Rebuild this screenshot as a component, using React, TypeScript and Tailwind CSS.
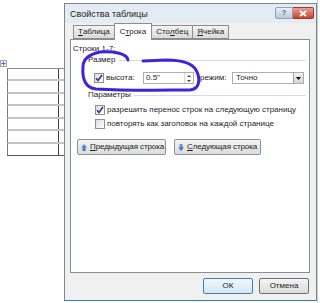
import React from 'react';

const font = { fontFamily: '"Liberation Sans", Arial, sans-serif' };

function Check({ checked }: { checked?: boolean }) {
  return (
    <span className="flex h-[10px] w-[10px] shrink-0 items-center justify-center border border-[#8e8f8f] bg-gradient-to-br from-[#dcdcdc] to-white">
      {checked && (
        <svg width="8" height="8" viewBox="0 0 8 8">
          <path d="M1 4.2 L3 6.5 L7 1" fill="none" stroke="#2b3f86" strokeWidth="1.6" />
        </svg>
      )}
    </span>
  );
}

function Tab({ label, u, active }: { label: string; u: number; active?: boolean }) {
  const text = (
    <>
      {label.slice(0, u)}
      <u>{label[u]}</u>
      {label.slice(u + 1)}
    </>
  );
  if (active) {
    return (
      <div className="relative z-10 -mb-px flex h-[17px] items-center border border-b-0 border-[#8c8e94] bg-white px-[5px] text-[8px] text-[#1e1e1e]">
        {text}
      </div>
    );
  }
  return (
    <div className="mt-[2px] flex h-[14px] items-center border border-r-0 border-[#8c8e94] bg-gradient-to-b from-[#f4f4f4] to-[#dadada] px-[4px] text-[8px] text-[#1e1e1e]">
      {text}
    </div>
  );
}

function GroupHead({ label }: { label: string }) {
  return (
    <div className="flex h-[10px] items-center pl-[17px] pr-[3px]">
      <span className="text-[8px] text-[#222]">{label}</span>
      <span className="ml-[3px] h-px flex-1 bg-[#d5dde3]" />
    </div>
  );
}

function Arrow({ down }: { down?: boolean }) {
  return (
    <svg width="6" height="7" viewBox="0 0 6 7" className="shrink-0">
      <defs>
        <linearGradient id={down ? 'ad' : 'au'} x1="0" y1="0" x2="1" y2="1">
          <stop offset="0" stopColor="#7fb2f0" />
          <stop offset="1" stopColor="#1f54b8" />
        </linearGradient>
      </defs>
      {down ? (
        <path d="M1.5 0 H4.5 V3.5 H6 L3 7 L0 3.5 H1.5 Z" fill="url(#ad)" />
      ) : (
        <path d="M3 0 L6 3.5 H4.5 V7 H1.5 V3.5 H0 Z" fill="url(#au)" />
      )}
    </svg>
  );
}

function NavButton({ label, down, w }: { label: string; down?: boolean; w: string }) {
  return (
    <div
      className={`flex h-[16px] items-center gap-[3px] overflow-hidden whitespace-nowrap rounded-[2px] border border-[#8e8f8f] bg-gradient-to-b from-[#f4f4f4] to-[#dcdcdc] pl-[3px] text-[8px] tracking-[-0.1px] text-[#1e1e1e] ${w}`}
    >
      <Arrow down={down} />
      <span>
        <u>{label[0]}</u>
        {label.slice(1)}
      </span>
    </div>
  );
}

function TableSketch() {
  const rows = [12, 13, 12, 13, 12, 13, 12];
  return (
    <div className="flex w-[64px] shrink-0 flex-col pt-[60px]">
      <svg width="7" height="7" viewBox="0 0 7 7">
        <rect x="0.5" y="0.5" width="6" height="6" fill="#f4f6fa" stroke="#9aa4b4" />
        <path d="M3.5 1.5 V5.5 M1.5 3.5 H5.5" stroke="#3a6cc0" strokeWidth="1" />
      </svg>
      <div className="ml-[7px] mt-px border-t border-[#8d8d8d]">
        {rows.map((h, i) => (
          <div
            key={i}
            className={`flex border-l border-[#7a7a7a] ${i === rows.length - 1 ? 'border-b border-b-[#555]' : 'border-b-2 border-b-[#c4c4c4]'}`}
            style={{ height: h }}
          >
            <div className="w-[51px] border-r border-[#404040]" />
            <div className="flex-1" />
          </div>
        ))}
      </div>
    </div>
  );
}

export default function App() {
  return (
    <div className="relative flex h-[303px] w-[320px] overflow-hidden bg-white" style={font}>
      <TableSketch />

      <div className="mt-[3px] flex h-[298px] w-[253px] shrink-0 flex-col border border-[#7d8894] border-b-[#2f7fae] bg-[#e3ebf3]">
        {/* title bar */}
        <div className="flex h-[19px] items-start pl-[5px] pr-[2px]">
          <span className="mt-[4px] text-[9px] text-[#1e1e1e]">Свойства таблицы</span>
          <div className="ml-auto mt-[3px] flex">
            <div className="flex h-[12px] w-[18px] items-center justify-center rounded-l-[2px] border border-[#8ea1b6] bg-gradient-to-b from-[#e8eff7] to-[#b9c9dc] text-[8px] font-bold text-[#5a6c82]">
              ?
            </div>
            <div className="flex h-[12px] w-[21px] items-center justify-center rounded-r-[2px] border border-l-0 border-[#9c3a2e] bg-gradient-to-b from-[#e6a093] to-[#c8412f]">
              <svg width="8" height="7" viewBox="0 0 8 7">
                <path d="M1 1 L7 6 M7 1 L1 6" stroke="white" strokeWidth="1.7" />
              </svg>
            </div>
          </div>
        </div>

        {/* client */}
        <div className="flex flex-1 flex-col bg-[#f0f0f0] pl-[5px] pr-[6px]">
          <div className="flex h-[16px] items-start pl-[3px]">
            <Tab label="Таблица" u={0} />
            <Tab label="Строка" u={1} active />
            <div className="mt-[2px] flex h-[14px] items-center border border-l-0 border-[#8c8e94] bg-gradient-to-b from-[#f4f4f4] to-[#dadada] px-[4px] text-[8px] text-[#1e1e1e]">
              Сто<u>л</u>бец
            </div>
            <div className="mt-[2px] flex h-[14px] items-center border border-l-0 border-[#8c8e94] bg-gradient-to-b from-[#f4f4f4] to-[#dadada] px-[4px] text-[8px] text-[#1e1e1e]">
              <u>Я</u>чейка
            </div>
          </div>

          <div className="flex h-[234px] w-[240px] flex-col border border-[#8c8e94] bg-white text-[#1e1e1e]">
            <div className="mt-[4px] h-[10px] pl-[2px] text-[8px] leading-[10px]">Строки 1-7:</div>
            <div className="mt-px">
              <GroupHead label="Размер" />
            </div>
            <div className="mt-[7px] flex h-[12px] items-center pl-[23px] text-[8px]">
              <Check checked />
              <span className="ml-[2px] w-[37px]">высота:</span>
              <div className="flex h-[12px] w-[51px] items-center border border-[#abadb3] bg-white pl-[2px]">
                <span className="flex-1">0.5"</span>
                <div className="flex h-full w-[9px] flex-col border-l border-[#d5d5d5]">
                  <div className="flex flex-1 items-center justify-center">
                    <svg width="4" height="2" viewBox="0 0 4 2"><path d="M0 2 L2 0 L4 2 Z" fill="#444" /></svg>
                  </div>
                  <div className="flex flex-1 items-center justify-center">
                    <svg width="4" height="2" viewBox="0 0 4 2"><path d="M0 0 L2 2 L4 0 Z" fill="#444" /></svg>
                  </div>
                </div>
              </div>
              <span className="ml-[6px] w-[32px]">режим:</span>
              <div className="flex h-[12px] w-[72px] items-center border border-[#abadb3] bg-white pl-[3px]">
                <span className="flex-1">Точно</span>
                <div className="flex h-full w-[10px] items-center justify-center border-l border-[#a0a0a0] bg-gradient-to-b from-[#f2f2f2] to-[#d4d4d4]">
                  <svg width="5" height="3" viewBox="0 0 5 3"><path d="M0 0 H5 L2.5 3 Z" fill="#000" /></svg>
                </div>
              </div>
            </div>
            <div className="mt-[6px]">
              <GroupHead label="Параметры" />
            </div>
            <div className="mt-[4px] flex h-[11px] items-center gap-[2px] pl-[24px] text-[8px]">
              <Check checked />
              <span>разрешить перенос строк на следующую страницу</span>
            </div>
            <div className="mt-[3px] flex h-[11px] items-center gap-[2px] pl-[24px] text-[8px]">
              <Check />
              <span>повторять как заголовок на каждой странице</span>
            </div>
            <div className="mt-[10px] flex gap-[8px] pl-[6px]">
              <NavButton label="Предыдущая строка" w="w-[89px]" />
              <NavButton label="Следующая строка" down w="w-[87px]" />
            </div>
          </div>

          <div className="flex justify-end gap-[6px] pr-[1px] pt-[5px]">
            <div className="flex h-[16px] w-[50px] items-center justify-center rounded-[2px] border border-[#3c7fb1] bg-gradient-to-b from-[#f2f7fb] to-[#d6e6f2] text-[8px] text-[#1e1e1e]">
              ОК
            </div>
            <div className="flex h-[16px] w-[50px] items-center justify-center rounded-[2px] border border-[#707070] bg-gradient-to-b from-[#f4f4f4] to-[#dcdcdc] text-[8px] text-[#1e1e1e]">
              Отмена
            </div>
          </div>
        </div>
      </div>

      <div className="flex-1 border-l border-[#c8c8c8]" />

      {/* hand-drawn ink loop */}
      <svg className="pointer-events-none absolute left-0 top-0" width="320" height="303" viewBox="0 0 320 303">
        <path
          d="M128 60 C127 53 112 51 100 52 C90 54 83 58 83 67 C82 78 85 88 96 89 C130 91 170 90 190 90 C201 89 200 77 196 70 C192 63 181 60 166 60 L143 61"
          fill="none"
          stroke="#4322d8"
          strokeWidth="3"
          strokeLinecap="round"
        />
      </svg>
    </div>
  );
}
